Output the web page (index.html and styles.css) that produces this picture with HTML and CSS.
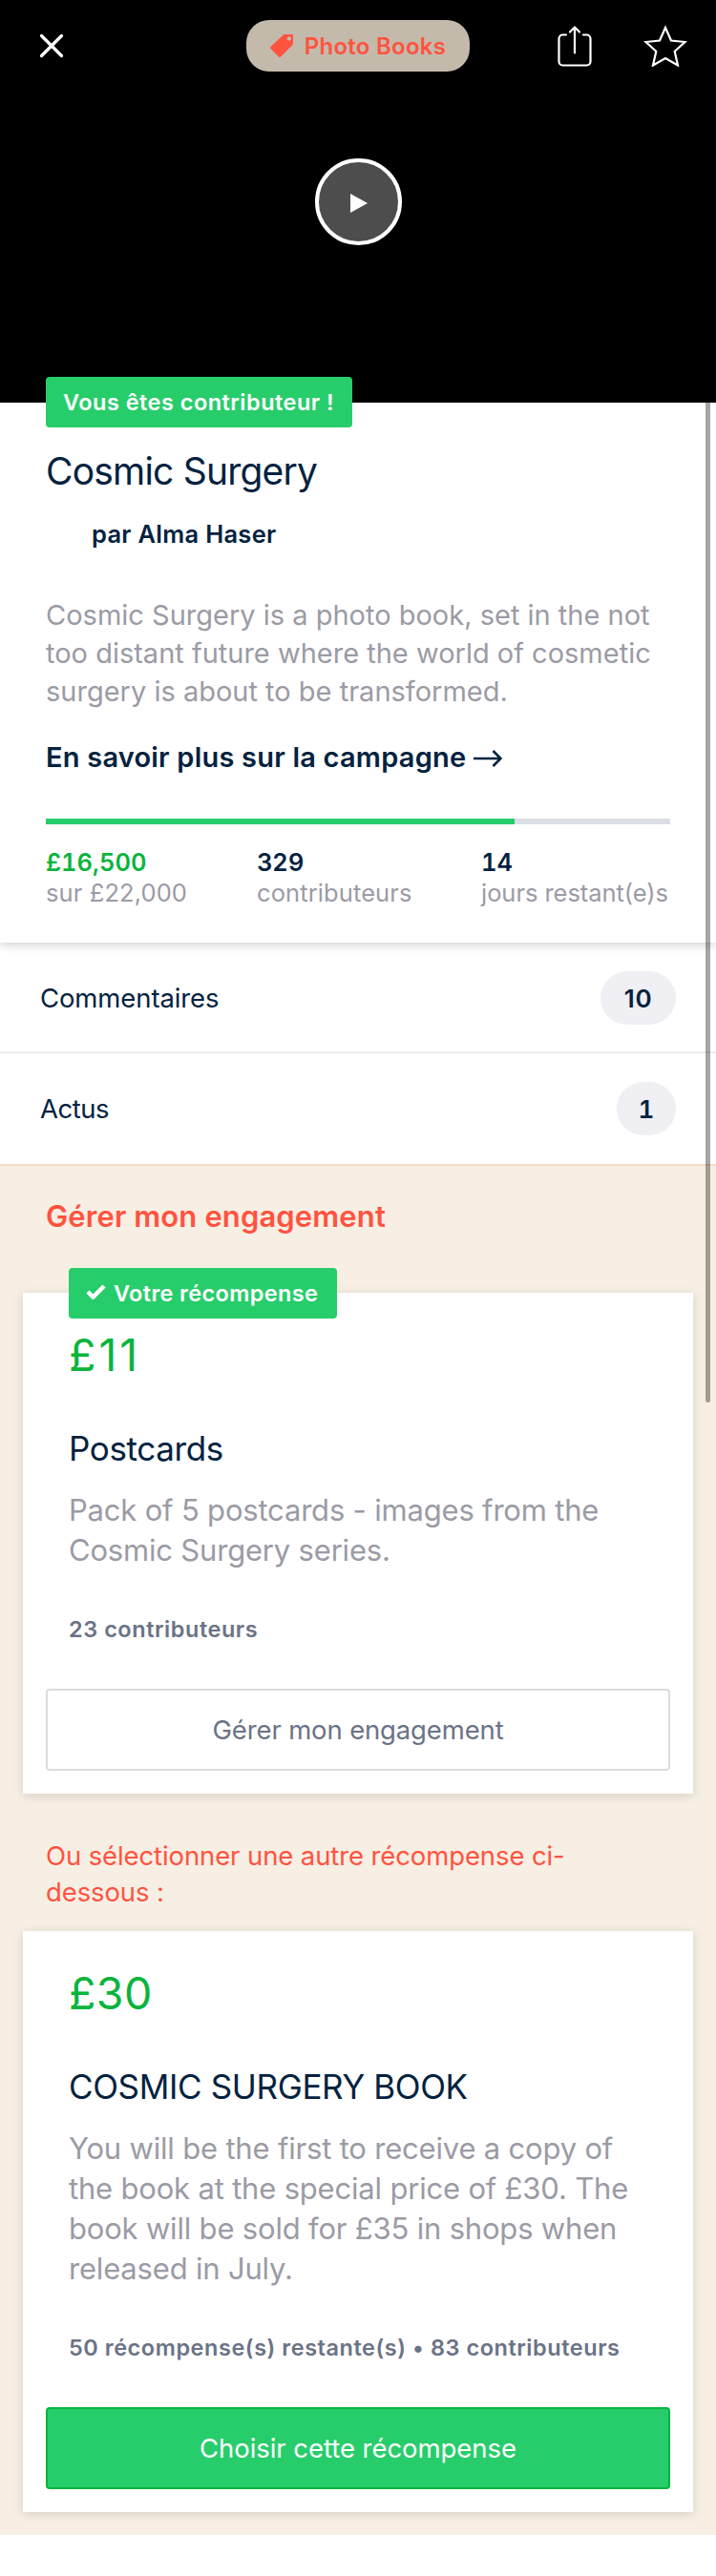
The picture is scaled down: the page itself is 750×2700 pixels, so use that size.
FILE: index.html
```
<!DOCTYPE html>
<html lang="fr">
<head>
<meta charset="utf-8">
<title>Cosmic Surgery</title>
<link rel="stylesheet" href="styles.css">
</head>
<body>
<main class="page">
  <header class="hero">
    <nav class="toolbar">
      <svg class="close" width="28" height="28" viewBox="0 0 28 28"><path d="M3.500 3.500l21 21M24.500 3.500l-21 21"/></svg>
      <span class="category">
        <svg width="24" height="24" viewBox="0 0 24 24"><path fill-rule="evenodd" d="M14.300 0H23a1 1 0 0 1 1 1v9.500L11 23.400a1.500 1.500 0 0 1-2.100 0L.5 15a1.500 1.500 0 0 1 0-2.100zM19.800 2.200a2.200 2.200 0 1 0 0 4.400 2.200 2.200 0 0 0 0-4.400z"/></svg>
        Photo Books
      </span>
      <span class="actions">
        <svg width="36" height="44" viewBox="0 0 36 44"><path d="M9 10.500H5.500a4 4 0 0 0-4 4v24a4 4 0 0 0 4 4h25a4 4 0 0 0 4-4v-24a4 4 0 0 0-4-4H27M18 29.500V2.500M13 7.500l5-5 5 5"/></svg>
        <svg width="46" height="44" viewBox="0 0 46 44"><path class="star" d="M23 3l6 13.500 14.500 1.500-10.800 9.800 3.300 14.700-13-7.500-13 7.500 3.300-14.700L2.500 18 17 16.500z"/></svg>
      </span>
    </nav>
    <div class="play"><svg width="18" height="20" viewBox="0 0 18 20"><path d="M0 0l18 10L0 20z"/></svg></div>
  </header>

  <section class="campaign">
    <span class="badge">Vous êtes contributeur !</span>
    <h1 class="title">Cosmic Surgery</h1>
    <p class="author">par Alma Haser</p>
    <p class="blurb">Cosmic Surgery is a photo book, set in the not<br>too distant future where the world of cosmetic<br>surgery is about to be transformed.</p>
    <a class="more">En savoir plus sur la campagne<svg width="30" height="20" viewBox="0 0 30 20"><path d="M0 10h28.500M20.500 2l8 8-8 8"/></svg></a>
    <div class="progress"><div class="progress-fill" style="width:75%"></div></div>
    <div class="stats">
      <div class="stat raised"><b>£16,500</b><span>sur £22,000</span></div>
      <div class="stat"><b>329</b><span>contributeurs</span></div>
      <div class="stat days"><b>14</b><span>jours restant(e)s</span></div>
    </div>
  </section>

  <section class="links">
    <div class="row"><span>Commentaires</span><b class="count">10</b></div>
    <div class="row last"><span class="news">Actus</span><b class="count single">1</b></div>
  </section>

  <section class="rewards">
    <h2 class="manage">Gérer mon engagement</h2>
    <article class="card">
      <span class="badge own"><svg width="21" height="16" viewBox="0 0 21 16"><path d="M2 8l5.500 5.500L19 2"/></svg>Votre récompense</span>
      <div class="price narrow">£11</div>
      <h3 class="name">Postcards</h3>
      <p class="details">Pack of 5 postcards - images from the<br>Cosmic Surgery series.</p>
      <p class="meta">23 contributeurs</p>
      <div class="button">Gérer mon engagement</div>
    </article>
    <h2 class="other">Ou sélectionner une autre récompense ci-<br>dessous :</h2>
    <article class="card second">
      <div class="price">£30</div>
      <h3 class="name">COSMIC SURGERY BOOK</h3>
      <p class="details">You will be the first to receive a copy of<br>the book at the special price of £30. The<br>book will be sold for £35 in shops when<br>released in July.</p>
      <p class="meta">50 récompense(s) restante(s) • 83 contributeurs</p>
      <div class="button primary">Choisir cette récompense</div>
    </article>
  </section>
  <div class="scrollbar"></div>
</main>
</body>
</html>
```
FILE: styles.css
```
* { box-sizing: border-box; }
body { margin: 0; background: #fff; color: #04223f; font-family: Inter, "Liberation Sans", sans-serif; }
h1, h2, h3, p { margin: 0; font-weight: 400; }
svg { display: block; flex: none; }
b { font-weight: 600; }
.page { position: relative; width: 750px; height: 2700px; }

/* Video header */
.hero { height: 422px; background: #000; display: flex; flex-direction: column; align-items: center; }
.toolbar { width: 100%; height: 96px; padding: 0 30px 0 40px; display: grid; grid-template-columns: 218px 234px 1fr; align-items: center; }
.close { fill: none; stroke: #fff; stroke-width: 3.2; stroke-linecap: round; }
.category { display: flex; align-items: center; justify-content: center; gap: 12px; height: 54px; border-radius: 24px; background: #c3baab; color: #ff5340; font-size: 24px; font-weight: 600; letter-spacing: .26px; }
.category svg { fill: #ff5340; }
.actions { display: flex; justify-content: flex-end; align-items: center; gap: 54px; fill: none; stroke: #fff; stroke-width: 2.200; stroke-linecap: round; stroke-linejoin: round; }
.star { stroke-linejoin: miter; }
.play { width: 91px; height: 91px; margin-top: 70px; border: 4px solid #fff; border-radius: 50%; background: #4d4d4d; display: flex; align-items: center; justify-content: center; }
.play svg { fill: #fff; margin: 3px 0 0 2px; }

/* Campaign summary */
.campaign { position: relative; z-index: 1; height: 566px; padding: 0 48px; background: #fff; box-shadow: 0 2px 10px rgba(0, 0, 0, .2); clip-path: inset(-30px 0 -16px 0); display: flex; flex-direction: column; }
.badge { align-self: flex-start; display: flex; align-items: center; width: 321px; height: 53px; margin-top: -27px; padding-left: 18px; border-radius: 4px; background: #27cd6b; color: #fff; font-size: 23.500px; font-weight: 600; letter-spacing: .478px; white-space: nowrap; }
.title { margin-top: 22px; font-size: 39px; line-height: 48px; letter-spacing: -.8px; }
.author { margin: 26px 0 0 48px; font-size: 25.500px; line-height: 32px; font-weight: 600; letter-spacing: .28px; }
.blurb { margin-top: 49px; font-size: 29px; line-height: 40px; letter-spacing: 0; color: #9b9ba5; white-space: nowrap; }
.more { display: flex; align-items: center; gap: 8px; margin-top: 29px; font-size: 29px; line-height: 40px; font-weight: 600; letter-spacing: .21px; }
.more svg { fill: none; stroke: #04223f; stroke-width: 2.600; margin-top: 1px; }
.progress { height: 6px; margin-top: 44px; background: #dcdee6; }
.progress-fill { height: 6px; background: #27cd6b; }
.stats { display: grid; grid-template-columns: 221px 235px auto; margin-top: 24px; font-size: 25.500px; line-height: 32px; white-space: nowrap; }
.stat { display: flex; flex-direction: column; }
.stat span { color: #9b9ba5; letter-spacing: .1px; }
.stat b { letter-spacing: .4px; }
.raised b { color: #0ab43c; font-variant-numeric: tabular-nums; letter-spacing: 0; }
.days b { font-variant-numeric: tabular-nums; letter-spacing: 0; }
.days span { letter-spacing: -.05px; }

/* Links with counters */
.row { height: 116px; padding: 2px 42px 0; display: flex; align-items: center; justify-content: space-between; border-bottom: 2px solid #ececec; font-size: 27.500px; letter-spacing: -.11px; }
.row.last { height: 118px; padding-top: 0; border-color: #f7d9c9; }
.news { letter-spacing: -.5px; }
.count { width: 79px; height: 56px; border-radius: 28px; background: #efeff4; display: flex; align-items: center; justify-content: center; font-size: 26px; letter-spacing: 0; font-variant-numeric: tabular-nums; }
.count:not(.single) { font-variant-numeric: normal; letter-spacing: .8px; }
.single { width: 62px; }

/* Rewards */
.rewards { height: 1435px; padding: 33px 24px 24px; background: #f7efe4; }
.manage { margin-left: 24px; font-size: 31px; line-height: 40px; font-weight: 600; letter-spacing: .12px; color: #ff5340; }
.card { display: flex; flex-direction: column; margin-top: 60px; padding: 0 24px 24px; background: #fff; box-shadow: 0 2px 10px rgba(0, 0, 0, .14); }
.own { width: 281px; margin: -26px 0 10px 24px; letter-spacing: .35px; gap: 8px; }
.own svg { fill: none; stroke: #fff; stroke-width: 4.500; margin-bottom: 3px; }
.price { margin-left: 24px; font-size: 46.500px; line-height: 56px; letter-spacing: .4px; color: #0ab43c; }
.narrow { letter-spacing: 3px; }
.name { margin: 48px 0 0 24px; font-size: 35px; line-height: 44px; letter-spacing: -.36px; }
.details { margin: 22px 0 0 24px; font-size: 31px; line-height: 42px; letter-spacing: -.19px; color: #9b9ba5; white-space: nowrap; }
.meta { margin: 46px 0 0 24px; font-size: 23.500px; line-height: 31px; margin-bottom: -1px; font-weight: 600; letter-spacing: .54px; color: #6b7386; white-space: nowrap; }
.button { height: 86px; margin-top: 48px; display: flex; align-items: center; justify-content: center; border: 2px solid #dcdcdc; border-radius: 4px; color: #6b7386; font-size: 27.500px; letter-spacing: -.15px; }
.primary { border-color: #0ab43c; background: #27cd6b; color: #fff; letter-spacing: -.05px; }
.other { margin: 46px 0 0 24px; font-size: 27.500px; line-height: 38px; letter-spacing: -.11px; color: #ff5340; }
.second { margin-top: 22px; padding-top: 37px; }

.scrollbar { position: absolute; z-index: 2; top: 422px; left: 739px; width: 5px; height: 1048px; border-radius: 0 0 3px 3px; background: rgba(0, 0, 0, .35); }
```
